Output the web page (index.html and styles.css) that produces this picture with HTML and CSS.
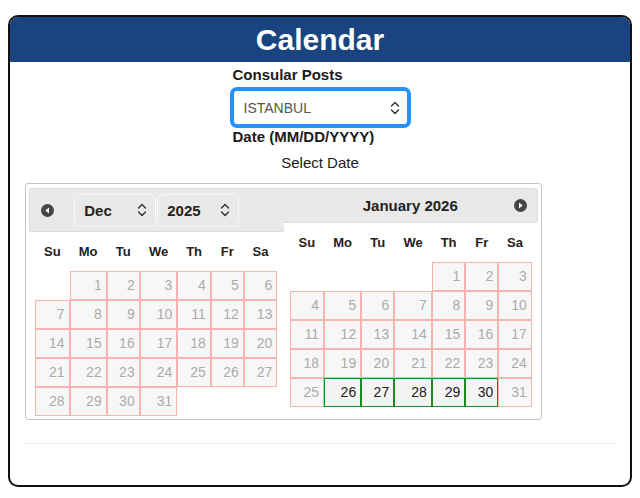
FILE: index.html
```html
<!DOCTYPE html>
<html lang="en">

<head>
  <meta charset="utf-8">
  <title>Calendar</title>
  <link rel="stylesheet" href="styles.css">
</head>

<body>

  <section class="card">
    <h1 class="card-title">Calendar</h1>

    <div class="card-body">
      <form class="post-form">
        <label class="field-label" for="post">Consular Posts</label>
        <div class="select-box">
          <select id="post">
            <option>ISTANBUL</option>
          </select>
          <svg class="chevrons" width="10" height="14" viewBox="0 0 10 14" fill="none" stroke="currentColor"
            stroke-width="1.4" stroke-linecap="round" stroke-linejoin="round">
            <path d="M1.5 5 5 1.5 8.5 5" />
            <path d="M1.5 9 5 12.5 8.5 9" />
          </svg>
        </div>
        <label class="field-label" for="date">Date (MM/DD/YYYY)</label>
        <p class="hint" id="date">Select Date</p>
      </form>

      <!-- two months side by side -->
      <div class="datepicker">

        <div class="month">
          <div class="month-head">
            <button type="button" class="nav nav-prev" aria-label="Prev">
              <svg width="13" height="13" viewBox="0 0 13 13">
                <circle cx="6.5" cy="6.5" r="6.5" fill="#454545" />
                <path d="M8 3.6 4.3 6.5 8 9.4Z" fill="#fff" />
              </svg>
            </button>
            <div class="pickers">
              <div class="pick">
                <select aria-label="Month">
                  <option>Dec</option>
                </select>
                <svg class="chevrons" width="10" height="14" viewBox="0 0 10 14" fill="none" stroke="currentColor"
                  stroke-width="1.4" stroke-linecap="round" stroke-linejoin="round">
                  <path d="M1.5 5 5 1.5 8.5 5" />
                  <path d="M1.5 9 5 12.5 8.5 9" />
                </svg>
              </div>
              <div class="pick">
                <select aria-label="Year">
                  <option>2025</option>
                </select>
                <svg class="chevrons" width="10" height="14" viewBox="0 0 10 14" fill="none" stroke="currentColor"
                  stroke-width="1.4" stroke-linecap="round" stroke-linejoin="round">
                  <path d="M1.5 5 5 1.5 8.5 5" />
                  <path d="M1.5 9 5 12.5 8.5 9" />
                </svg>
              </div>
            </div>
          </div>
          <table class="days">
            <thead>
              <tr>
                <th>Su</th><th>Mo</th><th>Tu</th><th>We</th><th>Th</th><th>Fr</th><th>Sa</th>
              </tr>
            </thead>
            <tbody>
              <tr>
                <td></td>
                <td class="off"><span>1</span></td>
                <td class="off"><span>2</span></td>
                <td class="off"><span>3</span></td>
                <td class="off"><span>4</span></td>
                <td class="off"><span>5</span></td>
                <td class="off"><span>6</span></td>
              </tr>
              <tr>
                <td class="off"><span>7</span></td>
                <td class="off"><span>8</span></td>
                <td class="off"><span>9</span></td>
                <td class="off"><span>10</span></td>
                <td class="off"><span>11</span></td>
                <td class="off"><span>12</span></td>
                <td class="off"><span>13</span></td>
              </tr>
              <tr>
                <td class="off"><span>14</span></td>
                <td class="off"><span>15</span></td>
                <td class="off"><span>16</span></td>
                <td class="off"><span>17</span></td>
                <td class="off"><span>18</span></td>
                <td class="off"><span>19</span></td>
                <td class="off"><span>20</span></td>
              </tr>
              <tr>
                <td class="off"><span>21</span></td>
                <td class="off"><span>22</span></td>
                <td class="off"><span>23</span></td>
                <td class="off"><span>24</span></td>
                <td class="off"><span>25</span></td>
                <td class="off"><span>26</span></td>
                <td class="off"><span>27</span></td>
              </tr>
              <tr>
                <td class="off"><span>28</span></td>
                <td class="off"><span>29</span></td>
                <td class="off"><span>30</span></td>
                <td class="off"><span>31</span></td>
                <td></td>
                <td></td>
                <td></td>
              </tr>
            </tbody>
          </table>
        </div>

        <div class="month">
          <div class="month-head">
            <span class="month-title">January 2026</span>
            <button type="button" class="nav nav-next" aria-label="Next">
              <svg width="13" height="13" viewBox="0 0 13 13">
                <circle cx="6.5" cy="6.5" r="6.5" fill="#454545" />
                <path d="M5 3.6 8.7 6.5 5 9.4Z" fill="#fff" />
              </svg>
            </button>
          </div>
          <table class="days">
            <thead>
              <tr>
                <th>Su</th><th>Mo</th><th>Tu</th><th>We</th><th>Th</th><th>Fr</th><th>Sa</th>
              </tr>
            </thead>
            <tbody>
              <tr>
                <td></td>
                <td></td>
                <td></td>
                <td></td>
                <td class="off"><span>1</span></td>
                <td class="off"><span>2</span></td>
                <td class="off"><span>3</span></td>
              </tr>
              <tr>
                <td class="off"><span>4</span></td>
                <td class="off"><span>5</span></td>
                <td class="off"><span>6</span></td>
                <td class="off"><span>7</span></td>
                <td class="off"><span>8</span></td>
                <td class="off"><span>9</span></td>
                <td class="off"><span>10</span></td>
              </tr>
              <tr>
                <td class="off"><span>11</span></td>
                <td class="off"><span>12</span></td>
                <td class="off"><span>13</span></td>
                <td class="off"><span>14</span></td>
                <td class="off"><span>15</span></td>
                <td class="off"><span>16</span></td>
                <td class="off"><span>17</span></td>
              </tr>
              <tr>
                <td class="off"><span>18</span></td>
                <td class="off"><span>19</span></td>
                <td class="off"><span>20</span></td>
                <td class="off"><span>21</span></td>
                <td class="off"><span>22</span></td>
                <td class="off"><span>23</span></td>
                <td class="off"><span>24</span></td>
              </tr>
              <tr>
                <td class="off"><span>25</span></td>
                <td class="open"><a href="#">26</a></td>
                <td class="open"><a href="#">27</a></td>
                <td class="open"><a href="#">28</a></td>
                <td class="open"><a href="#">29</a></td>
                <td class="open"><a href="#">30</a></td>
                <td class="off"><span>31</span></td>
              </tr>
            </tbody>
          </table>
        </div>

      </div>

      <hr class="divider" />
    </div>
  </section>

</body>

</html>
```

FILE: styles.css
```css
body {
  margin: 8px;
  font-family: "Liberation Sans", Arial, sans-serif;
  color: #1b1b1b;
}

.card {
  margin-top: 7px;
  border: 2px solid #111;
  border-radius: 10px;
  overflow: hidden;
  background-color: #fff;
}

.card-title {
  margin: 0;
  background-color: #1a4480;
  color: #fff;
  font-size: 30px;
  line-height: 45px;
  text-align: center;
}

.card-body {
  padding: 4px 15px 41px;
}

/* post + date fields */
.post-form {
  display: flex;
  flex-flow: column;
  inline-size: 181px;
  margin-inline: auto;
}

.field-label {
  padding-inline-start: 3px;
  font-size: 15px;
  font-weight: bold;
  line-height: 17px;
}

.select-box {
  display: flex;
  align-items: center;
  box-sizing: border-box;
  block-size: 41px;
  margin-block-start: 4px;
  padding: 0 7px 0 10px;
  border: 4px solid #2491ff;
  border-radius: 7px;
  color: #333;

  select {
    flex: 1;
    min-inline-size: 0;
    appearance: none;
    border: 0;
    padding: 0;
    background: none;
    outline: none;
    font: 14px "Liberation Sans", Arial, sans-serif;
    color: #555;
  }
}

.chevrons {
  flex: none;
}

.hint {
  margin: 9px 0 12px;
  font-size: 15px;
  line-height: 17px;
  text-align: center;
}

/* datepicker */
.datepicker {
  display: flex;
  align-items: flex-start;
  box-sizing: border-box;
  inline-size: 517px;
  padding: 4px 3px 3px;
  border: 1px solid #c5c5c5;
  border-radius: 3px;
}

.month {
  flex: 1;
}

.month-head {
  display: grid;
  grid-template-columns: 34px 1fr 34px;
  align-items: center;
  box-sizing: border-box;
  border: 1px solid #ddd;
  background-color: #e9e9e9;
  color: #222;
}

.month:first-child .month-head {
  block-size: 44px;
  border-inline-end: 0;
  border-radius: 3px 0 0 3px;
}

.month:last-child .month-head {
  block-size: 35px;
  border-inline-start: 0;
  border-radius: 0 3px 3px 0;
}

.month-title {
  grid-column: 2;
  font-size: 15px;
  font-weight: bold;
  text-align: center;
}

.nav {
  display: flex;
  justify-content: center;
  align-items: center;
  border: 0;
  padding: 0;
  background: none;
  cursor: pointer;
}

.nav-next {
  grid-column: 3;
}

.pickers {
  display: flex;
  justify-content: center;
  gap: 1px;
}

.pick {
  display: flex;
  align-items: center;
  box-sizing: border-box;
  inline-size: 82px;
  block-size: 33px;
  padding: 0 8px 0 9px;
  border: 1px solid #f8f8f8;
  border-radius: 6px;
  color: #333;

  select {
    flex: 1;
    min-inline-size: 0;
    appearance: none;
    border: 0;
    padding: 0;
    background: none;
    outline: none;
    font: bold 15px "Liberation Sans", Arial, sans-serif;
    color: #222;
  }
}

.days {
  inline-size: 242px;
  margin: 0 auto;
  border-collapse: separate;
  border-spacing: 0;
  font-size: 14px;

  th {
    padding: 12px 5px;
    font-size: 13px;
    line-height: 15px;
    font-weight: bold;
    color: #222;
  }

  td {
    padding: 0;
  }

  span,
  a {
    display: block;
    padding: 0 4px;
    border: 1px solid #f7b5b1;
    background-color: #f7f7f7;
    line-height: 27px;
    text-align: right;
    text-decoration: none;
    color: #ababab;
  }

  .open a {
    border-color: #1f8a22;
    background-color: #f4f4f4;
    color: #222;
  }
}

.divider {
  margin: 23px 0 0;
  border: 0;
  border-block-start: 1px solid #ececec;
}
```
